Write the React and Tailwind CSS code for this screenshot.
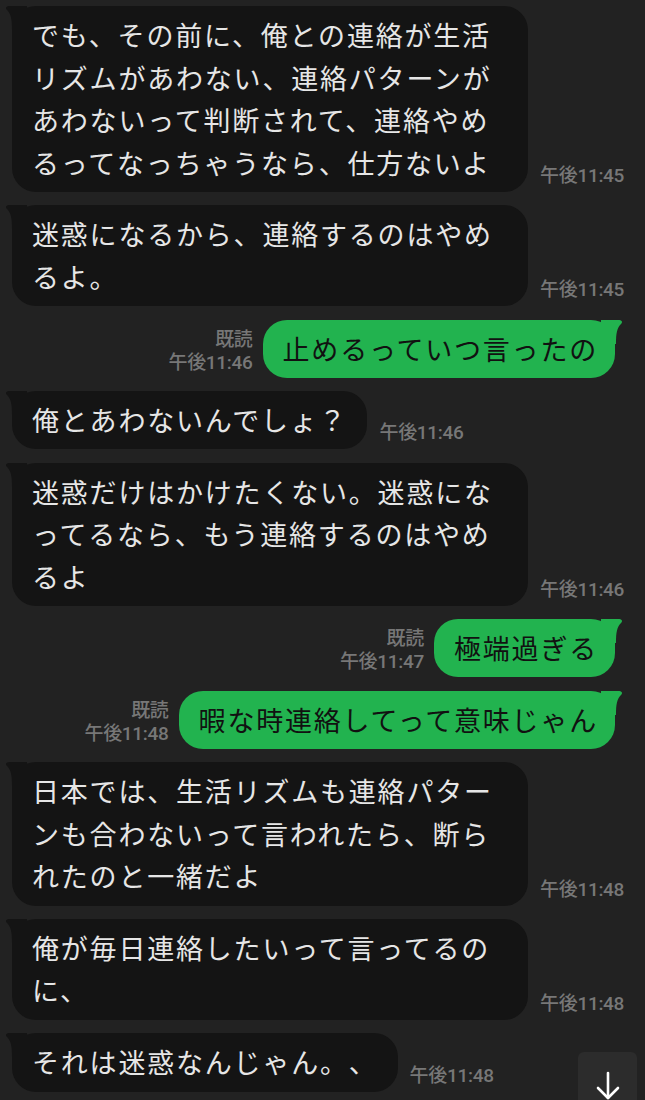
import React from "react";

const jp = { fontFamily: '"Noto Sans CJK JP", "Noto Sans", sans-serif' };
const num = { fontFamily: 'Roboto, "Noto Sans CJK JP", sans-serif' };

function TailLeft() {
  return (
    <svg className="absolute -left-[9px] top-0" width="24" height="24" viewBox="0 0 24 24">
      <path d="M24 0 L7 0 C3 0 2 2 4 4 C8 8 9 13 9 24 L24 24 Z" fill="#141414" />
    </svg>
  );
}

function TailRight() {
  return (
    <svg className="absolute -right-[10px] top-0" width="24" height="24" viewBox="0 0 24 24">
      <path d="M0 0 L17 0 C21 0 22 2 20 4 C16 8 15 13 15 24 L0 24 Z" fill="#22b34f" />
    </svg>
  );
}

function Time({ t }) {
  return (
    <div style={num} className="text-[19px] font-medium leading-[22px] tracking-[-0.3px] text-[#777777] whitespace-nowrap pb-[5px]">
      {t}
    </div>
  );
}

function Theirs({ lines, time, wide }) {
  return (
    <div className="flex items-end gap-[12px]">
      <div
        style={jp}
        className={`relative bg-[#141414] rounded-[24px] px-[20px] py-[8px] text-[27px] leading-[42.5px] tracking-[1.8px] text-[#e6e6e6] whitespace-nowrap [text-spacing-trim:space-all] ${wide ? "w-[516px]" : ""}`}
      >
        <TailLeft />
        {lines.map((l, i) => (
          <div key={i}>{l}</div>
        ))}
      </div>
      <Time t={time} />
    </div>
  );
}

function Mine({ text, time }) {
  return (
    <div className="flex items-end justify-end gap-[10px] pr-[30px]">
      <div style={num} className="flex flex-col items-end text-[19px] font-medium leading-[23px] tracking-[-0.3px] text-[#777777] pb-[4px]">
        <span>既読</span>
        <span>{time}</span>
      </div>
      <div
        style={jp}
        className="relative bg-[#22b34f] rounded-[24px] pl-[20px] pr-[17px] py-[8px] text-[27px] leading-[42px] tracking-[1.8px] text-[#111111] whitespace-nowrap [text-spacing-trim:space-all]"
      >
        <TailRight />
        {text}
      </div>
    </div>
  );
}

export default function App() {
  return (
    <div className="relative h-[1100px] w-[645px] overflow-hidden bg-[#222222]">
      <div className="flex flex-col gap-[13.3px] pl-[12px] pt-[6px]">
        <Theirs
          wide
          time="午後11:45"
          lines={[
            "でも、その前に、俺との連絡が生活",
            "リズムがあわない、連絡パターンが",
            "あわないって判断されて、連絡やめ",
            "るってなっちゃうなら、仕方ないよ",
          ]}
        />
        <Theirs wide time="午後11:45" lines={["迷惑になるから、連絡するのはやめ", "るよ。"]} />
        <Mine text="止めるっていつ言ったの" time="午後11:46" />
        <Theirs time="午後11:46" lines={["俺とあわないんでしょ？"]} />
        <Theirs
          wide
          time="午後11:46"
          lines={["迷惑だけはかけたくない。迷惑にな", "ってるなら、もう連絡するのはやめ", "るよ"]}
        />
        <Mine text="極端過ぎる" time="午後11:47" />
        <Mine text="暇な時連絡してって意味じゃん" time="午後11:48" />
        <Theirs
          wide
          time="午後11:48"
          lines={["日本では、生活リズムも連絡パター", "ンも合わないって言われたら、断ら", "れたのと一緒だよ"]}
        />
        <Theirs wide time="午後11:48" lines={["俺が毎日連絡したいって言ってるの", "に、"]} />
        <Theirs time="午後11:48" lines={["それは迷惑なんじゃん。、"]} />
      </div>
      <div className="absolute left-[578px] top-[1052px] flex h-[70px] w-[59px] items-start justify-center rounded-[6px] bg-[#2c2c2c] pt-[19px]">
        <svg width="28" height="30" viewBox="0 0 28 30" fill="none" stroke="#ffffff" strokeWidth="2.6" strokeLinecap="round" strokeLinejoin="round">
          <path d="M14 2 V27" />
          <path d="M4 17 L14 27 L24 17" />
        </svg>
      </div>
    </div>
  );
}
